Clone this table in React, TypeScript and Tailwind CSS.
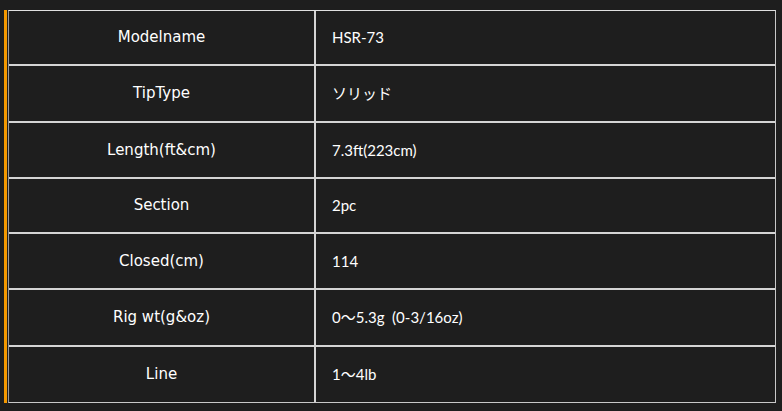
const rows: { label: string; value: string; h: string }[] = [
  { label: "Modelname", value: "HSR-73", h: "h-[53px]" },
  { label: "TipType", value: "ソリッド", h: "h-[57px]" },
  { label: "Length(ft&cm)", value: "7.3ft(223cm)", h: "h-[56px]" },
  { label: "Section", value: "2pc", h: "h-[55px]" },
  { label: "Closed(cm)", value: "114", h: "h-[56px]" },
  { label: "Rig wt(g&oz)", value: "0～5.3g\u00a0\u00a0(0-3/16oz)", h: "h-[57px]" },
  { label: "Line", value: "1～4lb", h: "h-[57px]" },
];

export default function App() {
  return (
    <div
      className="w-[782px] h-[411px] bg-[#1e1e1e] pt-[10px] pl-[4px] text-white text-[15px]"
      style={{ fontFamily: "Lato, 'Noto Sans CJK JP', sans-serif" }}
    >
      <div className="flex">
        <div className="w-[3px] bg-[#f39800] mr-[1px]" />
        <div className="w-[768px] border border-t-[#e0e0e0] border-l-[#9a9a9a] border-r-[#c8c8c8] border-b-[#c8c8c8]">
          {rows.map((row, i) => (
            <div
              key={row.label}
              className={`flex ${row.h} ${i > 0 ? "border-t-2 border-[#d4d4d4]" : ""}`}
            >
              <div
                className="w-[307px] shrink-0 flex items-center justify-center border-r-2 border-[#d4d4d4] text-[15px]"
                style={{ fontFamily: "'DejaVu Sans', sans-serif" }}
              >
                {row.label}
              </div>
              <div className="flex-1 flex items-center pl-[16px]">{row.value}</div>
            </div>
          ))}
        </div>
      </div>
    </div>
  );
}
